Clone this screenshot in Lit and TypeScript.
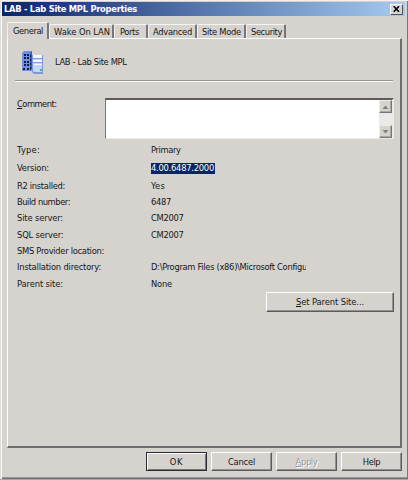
import { LitElement, html, css } from "lit";
import { customElement, property } from "lit/decorators.js";
import { classMap } from "lit/directives/class-map.js";

// A single-line label whose tracking is adjusted to fill a given width.
@customElement("fit-label")
class FitLabel extends LitElement {
  @property({ type: Number }) w = 0;
  @property() text = "";
  @property() key = "";
  static styles = css`
    :host { display: inline-block; white-space: pre; line-height: 12px; }
    .key { text-decoration: underline; text-underline-offset: 1px; text-decoration-thickness: 1px; }
  `;
  render() {
    return html`<span class="run">${this.key ? html`<span class="key">${this.key}</span>` : ""}${this.text}</span>`;
  }
  firstUpdated() {
    const run = this.renderRoot.querySelector(".run") as HTMLElement;
    const count = this.key.length + this.text.length;
    const gap = (this.w - run.getBoundingClientRect().width) / count;
    run.style.letterSpacing = `${gap.toFixed(3)}px`;
  }
}

const tabs: [string, number, number, number][] = [
  ["General", 30, 42, 5],
  ["Wake On LAN", 56, 65, 4],
  ["Ports", 19, 34, 5],
  ["Advanced", 39, 49, 4],
  ["Site Mode", 39, 49, 4],
  ["Security", 31, 40, 4],
];

const rows: [string, number, string, number][] = [
  ["Type:", 23, "Primary", 29.5],
  ["Version:", 32, "4.00.6487.2000", 63],
  ["R2 installed:", 48, "Yes", 14],
  ["Build number:", 53, "6487", 20],
  ["Site server:", 46, "CM2007", 32.5],
  ["SQL server:", 46.5, "CM2007", 32.5],
  ["SMS Provider location:", 87, "", 0],
  ["Installation directory:", 84, "D:\\Program Files (x86)\\Microsoft Configu", 156],
  ["Parent site:", 46, "None", 21],
];

@customElement("app-root")
class AppRoot extends LitElement {
  static styles = css`
    :host { display: block; }
    * { box-sizing: border-box; }
    svg { display: block; }
    .window {
      width: 408px; height: 480px; overflow: hidden; background: #d6d3ce; color: #151515;
      font: 9.3px/12px "DejaVu Sans Condensed", "DejaVu Sans", sans-serif;
      display: flex; flex-direction: column; padding: 2px 0 0 2px;
      border-bottom: 1px solid #a9a7a4;
      box-shadow: inset 1px 0 #dfddd9, inset 2px 0 #faf9f8, inset 0 1px #f2f1ef, inset -1px 0 #77757a, inset 0 -1px #737178, inset 0 -2px #98969a;
    }
    .title {
      height: 14px; margin-right: 3px; padding: 0 2px 0 2px; display: flex; align-items: center; justify-content: space-between;
      background: linear-gradient(90deg, #0a246a, #a6caf0);
      color: #fff; font-weight: bold;
    }
    .close { width: 13px; height: 11px; background: #d6d3ce; border: 1px solid; border-color: #fff #555 #555 #fff; display: grid; place-items: center; }
    .tabs { display: flex; align-items: flex-end; height: 22px; margin-left: 5px; }
    .tab {
      height: 14px; border-top: 1px solid #f6f5f3; border-left: 1px solid #f1f0ee; border-right: 2px solid #77757a;
      border-radius: 2px 2px 0 0; padding-top: 1px; white-space: nowrap;
    }
    .tab.on { height: 17px; margin-bottom: -1px; background: #d6d3ce; padding-top: 2px; z-index: 1; }
    .panel {
      width: 395px; height: 410px; margin-left: 5px; padding: 0 6px 0 9px;
      border: 1px solid #fff; border-right: 2px solid #6f6d70; border-bottom: 2px solid #6f6d70;
    }
    .head { display: flex; height: 41px; padding: 12px 0 0 5px; }
    .head svg { margin-right: 10px; }
    .head fit-label { margin-top: 5px; }
    .rule { height: 2px; margin: 0 1px 0 -2px; border-top: 1px solid #96948f; border-bottom: 1px solid #f8f7f5; }
    .comment { display: flex; justify-content: space-between; margin: 16px 0 0 0; }
    .box {
      width: 289px; height: 41px; background: #fff; display: flex; justify-content: flex-end;
      border: 1px solid #77757a; border-top: 2px solid #5d5b5e; border-right: 2px solid #eceae7; border-bottom: 1px solid #eceae7;
    }
    .scroll { width: 13px; background: #ebe9e7; display: flex; flex-direction: column; justify-content: space-between; }
    .arrow { height: 13px; background: #d6d3ce; border: 1px solid; border-color: #eeece9 #77757a #77757a #eeece9; display: grid; place-items: center; box-shadow: inset -1px -1px #aaa8a5; }
    .facts { display: grid; grid-template-columns: 134px 1fr; grid-template-rows: 18px 18px 17px 15px 18px 16px 16px 16px 17px; align-items: center; margin-top: 2px; }
    .value { display: flex; width: 155px; overflow: hidden; }
    .picked { background: #0a246a; color: #fff; width: 64px; height: 11px; align-items: center; }
    .btn {
      display: grid; place-items: center; width: 61px; height: 19px;
      border: 1px solid; border-color: #fff #5c5a5e #5c5a5e #fff; box-shadow: inset -1px -1px #929094;
    }
    .parent { width: 128px; height: 20px; margin: 0 0 0 auto; }
    .actions { display: flex; justify-content: flex-end; gap: 4px; padding: 4px 6px 0 0; }
    .main { border: 1px solid #2c2a32; box-shadow: inset 1px 1px #fff, inset -1px -1px #77757a; }
    .off { color: #99979a; text-shadow: 1px 1px #fff; }
  `;

  private button(key: string, text: string, w: number, kind = "") {
    return html`<div class=${classMap({ btn: true, [kind || "plain"]: true })}>
      <fit-label .w=${w} .key=${key} .text=${text}></fit-label>
    </div>`;
  }

  render() {
    return html`<div class="window">
      <div class="title">
        <fit-label .w=${133} .text=${"LAB - Lab Site MPL Properties"}></fit-label>
        <div class="close"><svg width="7" height="6" viewBox="0 0 7 6"><path d="M.7 .2 6 5.8M6 .2.7 5.8" stroke="#000" stroke-width="1.5" /></svg></div>
      </div>
      <div class="tabs">
        ${tabs.map(([text, w, width, pad], i) => html`<div class=${classMap({ tab: true, on: i === 0 })} style="width:${width}px;padding-left:${pad}px"><fit-label .w=${w} .text=${text}></fit-label></div>`)}
      </div>
      <div class="panel">
        <div class="head">
          <svg width="23" height="25" viewBox="0 0 23 25">
            <path d="M0 2 2 0H10V19L8 20H0Z" fill="#6f8fe0" />
            <path d="M8 2 10 0V19L8 20Z" fill="#3b5cb8" />
            <path d="M2 3H4V5H2ZM5 3H7V5H5ZM2 6H4V8H2ZM5 6H7V8H5ZM2 10H4V12H2ZM5 10H7V12H5ZM2 13H4V15H2ZM5 13H7V15H5ZM1 17H3V19H1ZM5 17H7V19H5ZM8 4H9V6H8ZM8 8H9V10H8ZM8 12H9V14H8ZM8 16H9V18H8Z" fill="#111a40" />
            <path d="M10 4H21V23H12L10 21Z" fill="#7f98d8" />
            <path d="M11 5H20V21H12L11 20Z" fill="#c4d4fa" />
            <path d="M11 4H20V7H11ZM11 9H20V11H11ZM12 13H20V14H12Z" fill="#f4f7ff" />
            <path d="M11 7H20V8H11ZM11 11H20V12H11Z" fill="#7f9ce6" />
            <path d="M18 18H20V20H18Z" fill="#35c95c" />
          </svg>
          <fit-label .w=${71.5} .text=${"LAB - Lab Site MPL"}></fit-label>
        </div>
        <div class="rule"></div>
        <div class="comment">
          <fit-label .w=${39.5} .key=${"C"} .text=${"omment:"}></fit-label>
          <div class="box"><div class="scroll">
            <div class="arrow"><svg width="7" height="4"><path d="M.5 4 3.5 .5 6.5 4Z" fill="#828084" /></svg></div>
            <div class="arrow"><svg width="7" height="4"><path d="M.5 0 3.5 3.5 6.5 0Z" fill="#828084" /></svg></div>
          </div></div>
        </div>
        <div class="facts">
          ${rows.map(([label, lw, value, vw], i) => html`
            <fit-label .w=${lw} .text=${label}></fit-label>
            <div class=${classMap({ value: true, picked: i === 1 })}>${value ? html`<fit-label .w=${vw} .text=${value}></fit-label>` : ""}</div>`)}
        </div>
        ${this.button("S", "et Parent Site...", 68, "parent")}
      </div>
      <div class="actions">
        ${this.button("", "OK", 13.5, "main")}
        ${this.button("", "Cancel", 27)}
        ${this.button("A", "pply", 22, "off")}
        ${this.button("", "Help", 17.5)}
      </div>
    </div>`;
  }
}
